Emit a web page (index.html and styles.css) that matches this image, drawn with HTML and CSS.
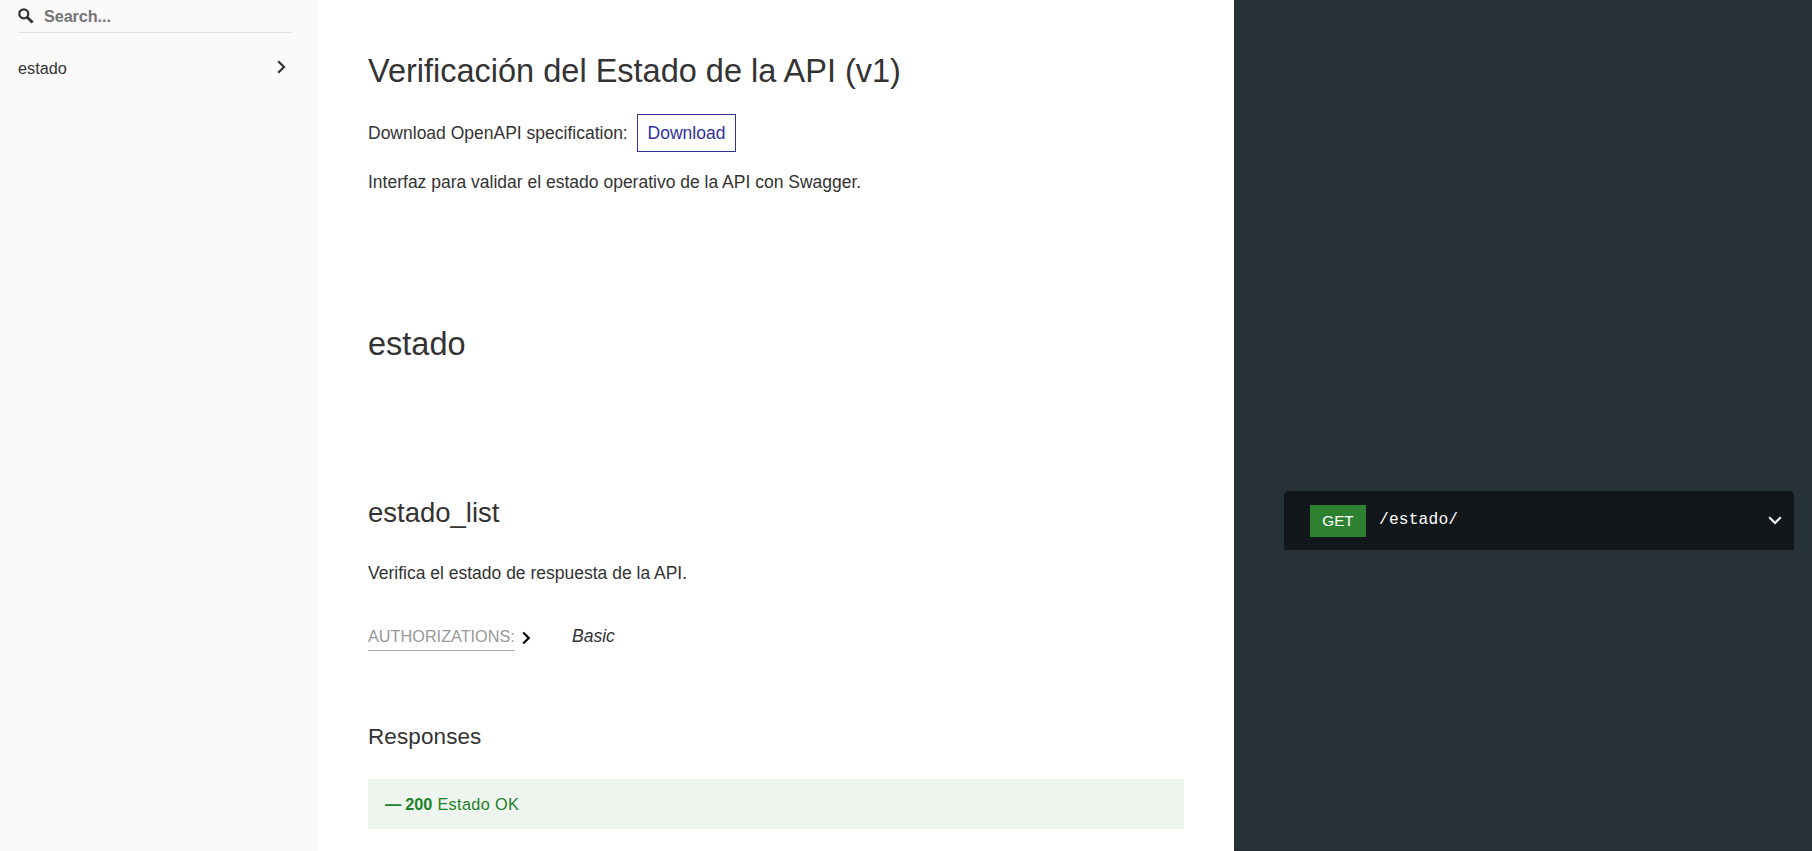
FILE: index.html
```html
<!DOCTYPE html>
<html lang="es">
<head>
<meta charset="utf-8">
<title>Verificación del Estado de la API</title>
<link rel="stylesheet" href="styles.css">
</head>
<body>
<div class="app">
  <aside class="sidebar">
    <div class="search">
      <svg class="search-icon" viewBox="0 0 16 16"><circle cx="5.8" cy="5.8" r="4.5" fill="none" stroke="#333" stroke-width="2.2"/><path d="M9.2 9.2L14.6 14.6" stroke="#333" stroke-width="2.8"/></svg>
      <span>Search...</span>
    </div>
    <div class="menu-item">
      <span>estado</span>
      <svg class="menu-arrow" viewBox="0 0 9 14"><path d="M1.2 1.2L7 7L1.2 12.8" fill="none" stroke="#333" stroke-width="2.2"/></svg>
    </div>
  </aside>
  <main class="content">
    <h1 class="title">Verificación del Estado de la API (v1)</h1>
    <p class="text spec"><span>Download OpenAPI specification:</span><a class="download">Download</a></p>
    <p class="text intro">Interfaz para validar el estado operativo de la API con Swagger.</p>
    <h1 class="title tag">estado</h1>
    <h2 class="operation">estado_list</h2>
    <p class="text summary">Verifica el estado de respuesta de la API.</p>
    <div class="auth">
      <span class="auth-label">AUTHORIZATIONS:</span>
      <svg class="auth-arrow" viewBox="0 0 9 14"><path d="M1.2 1.5L6.8 7L1.2 12.5" fill="none" stroke="#000" stroke-width="2.2"/></svg>
      <em class="auth-type">Basic</em>
    </div>
    <h3 class="responses">Responses</h3>
    <div class="response"><strong class="dash">—</strong><strong class="code">200</strong><span class="label">Estado OK</span></div>
  </main>
  <section class="samples">
    <div class="endpoint">
      <span class="verb">GET</span>
      <span class="path">/estado/</span>
      <svg class="expand" viewBox="0 0 14 9"><path d="M1.2 1.2L7 7L12.8 1.2" fill="none" stroke="#fff" stroke-width="2.2"/></svg>
    </div>
  </section>
</div>
</body>
</html>
```
FILE: styles.css
```css
* { box-sizing: border-box; }
body, h1, h2, h3, p { margin: 0; }
body {
  font-family: "Liberation Sans", Arial, sans-serif;
  font-size: 17.5px;
  color: #333;
  background: #fff;
}
h1, h2, h3 { font-weight: 400; }
.app { display: flex; width: 100%; height: 851px; overflow: hidden; }

.sidebar { width: 317px; flex: none; background: #fafafa; }
.search {
  display: flex;
  align-items: center;
  height: 33px;
  margin: 0 24px 0 18px;
  border-bottom: 1px solid #e1e1e1;
  font-size: 16.25px;
  font-weight: 700;
  line-height: 20px;
  letter-spacing: -0.1px;
  color: #757575;
}
.search-icon { width: 16px; height: 16px; margin-right: 10px; }
.menu-item {
  display: flex;
  align-items: center;
  justify-content: space-between;
  height: 40px;
  margin: 15px 31px 0 18px;
  font-size: 16.25px;
}
.menu-arrow { width: 9px; height: 14px; margin-bottom: 2px; }

.content { width: 917px; flex: none; padding: 45px 50px 0 51px; }
.title { font-size: 32.5px; line-height: 52px; }
.text { line-height: 26px; }
.spec { display: flex; align-items: center; height: 38px; margin-top: 17px; white-space: nowrap; }
.spec span { flex: 0 0 269px; }
.download {
  width: 99px;
  height: 38px;
  border: 1px solid #32329f;
  color: #32329f;
  line-height: 36px;
  text-align: center;
}
.intro { margin-top: 17px; }
.tag { margin-top: 123px; }
.operation { margin-top: 121px; font-size: 27.5px; line-height: 44px; }
.summary { margin-top: 25px; }
.auth { display: flex; align-items: flex-start; height: 28px; margin-top: 37px; }
.auth-label {
  width: 147px;
  height: 28px;
  font-size: 16.25px;
  line-height: 27px;
  white-space: nowrap;
  color: #999;
  border-bottom: 1px solid #adadad;
}
.auth-arrow { width: 9px; height: 14px; margin: 8px 0 0 7px; }
.auth-type { margin-left: 41px; line-height: 27px; }
.responses { margin-top: 66px; font-size: 22.5px; line-height: 40px; letter-spacing: 0.1px; }
.response {
  display: flex;
  align-items: center;
  height: 50px;
  margin-top: 22px;
  padding-left: 17px;
  border-radius: 2px;
  background: #eef5ef;
  color: #1d8127;
  font-size: 16.25px;
}
.code { margin: 0 5px 0 4px; }
.label { letter-spacing: 0.35px; }

.samples { flex: 1; padding: 491px 18px 0 50px; background: #263238; border-bottom: 1px solid #202a2f; }
.endpoint {
  display: flex;
  align-items: center;
  height: 59px;
  padding: 0 12px 0 26px;
  border-radius: 5px 5px 0 0;
  background: #11171a;
  color: #fff;
}
.verb {
  width: 56px;
  height: 32px;
  background: #2f8132;
  font-size: 15.3px;
  line-height: 32px;
  text-align: center;
}
.path { margin: 0 0 2px 13px; font: 16.25px/24px "Liberation Mono", "Courier New", monospace; letter-spacing: 0.15px; }
.expand { width: 14px; height: 9px; margin-left: auto; }
```
